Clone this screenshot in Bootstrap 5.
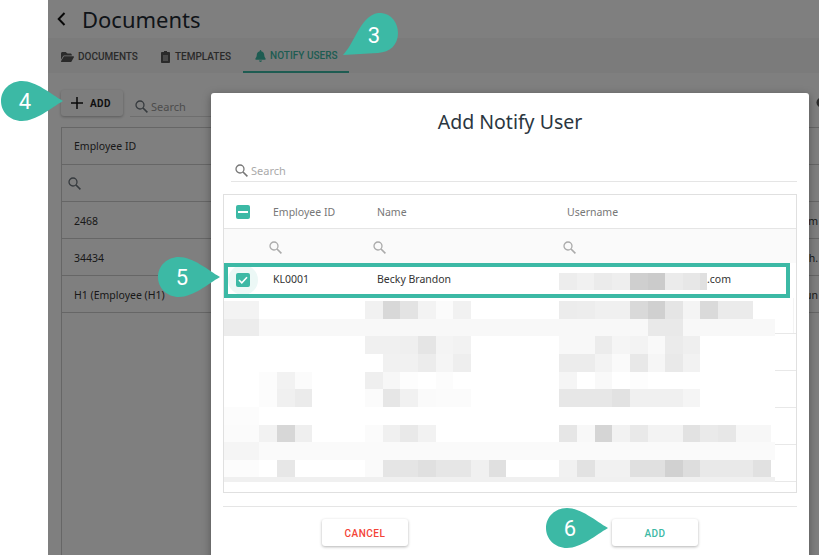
<!DOCTYPE html>
<html lang="en">
<head>
    <meta charset="UTF-8">
    <meta name="viewport" content="width=device-width, initial-scale=1.0">
    <title>Add Notify User</title>
    <link href="https://cdn.jsdelivr.net/npm/bootstrap@5.3.0/dist/css/bootstrap.min.css" rel="stylesheet">
    <style>
html, body { height: 100%; overflow: hidden; background: #fff; }
body { font-family: "Noto Sans", sans-serif; color: #222; }

.screen { width: 819px; height: 555px; overflow: hidden; }
.gutter { width: 48px; flex: none; }
.page { flex: 1; background: #fff; overflow: hidden; }
.dim { inset: 0; background: rgba(0, 0, 0, .5); }

/* Header and tabs */
.page-head { height: 38px; padding-left: 9px; }
.page-head h1 { font-size: 22px; font-weight: 400; margin: 0 0 0 16px; color: #1f2a33; line-height: 1; }
.tabs-band { height: 35px; background: #f6f6f6; padding-left: 1px; flex-wrap: nowrap; }
.tab-item { padding: 2px 12px 0; height: 35px; font-family: Roboto, sans-serif; font-size: 10px; font-weight: 500; color: #555; gap: 4px; white-space: nowrap; text-transform: uppercase; }
.tab-tight { margin-left: -1px; gap: 5px; }
.tab-item.is-on { color: #3cb9a5; border-bottom: 2px solid #3cb9a5; }

/* Background toolbar and list */
.tool-row { height: 54px; padding-left: 13px; padding-top: 17px; }
.btn-add { width: 62px; height: 26px; padding: 0 0 0 10px; background: #fafafa; border: 0; border-radius: 3px; box-shadow: 0 1px 3px rgba(0,0,0,.3); font-family: Roboto, sans-serif; font-size: 10px; font-weight: 700; letter-spacing: .4px; color: #222; gap: 7px; }
.bg-search { margin-left: 7px; width: 200px; height: 27px; padding: 0 0 1px 5px; border-bottom: 1px solid #ddd; font-size: 11px; color: #999; gap: 3px; }
.bg-search svg { margin-bottom: 2px; }
.info-dot { position: absolute; right: -8px; top: 97px; }
.bg-table { margin-left: 13px; border-left: 1px solid #ccc; border-top: 1px solid #ccc; height: 428px; font-size: 10.5px; color: #333; }
.bg-row { height: 37px; border-bottom: 1px solid #ccc; padding-left: 12px; }
.bg-first { padding-top: 2px; }
.bg-data { padding-top: 4px; }
.bg-tail { margin-left: auto; padding-right: 1px; }

/* Modal */
.notify-modal { position: absolute; left: 163px; top: 93px; width: 598px; height: 480px; background: #fff; border-radius: 3px; box-shadow: 0 2px 8px rgba(0,0,0,.35); padding: 0 12px 0 12px; }
.notify-modal h2 { font-size: 19.5px; font-weight: 400; color: #2b3640; text-align: center; margin: 0; height: 57px; padding-top: 16px; line-height: 1.35; }
.modal-search { height: 32px; margin-left: 8px; padding: 0 0 2px 4px; border-bottom: 1px solid #e5e5e5; font-size: 11px; color: #aaa; gap: 3px; }
.modal-search svg { margin-bottom: 2px; color: #777; }
.user-table { margin-top: 12px; height: 299px; border: 1px solid #e0e0e0; font-size: 10.5px; color: #333; }
.user-cols { display: grid; grid-template-columns: 49px 104px 190px 1fr; align-items: center; }
.user-head { height: 34px; padding-top: 2px; border-bottom: 1px solid #e5e5e5; color: #777; }
.user-head .chk-cell { margin-top: -2px; }
.user-filter { height: 34px; padding-top: 2px; background: #fafafa; }
.user-picked { height: 35px; border: 4px solid #3cb9a5; padding-bottom: 2px; width: 566px; grid-template-columns: 45px 104px 190px 1fr; overflow: hidden; color: #333; }
.chk-cell { padding-left: 12px; }
.chk-box { width: 14px; height: 14px; background: #3cb9a5; border-radius: 2px; }
.chk-halo { width: 30px; height: 30px; margin: -3px 0; background: #ecf8f6; border-radius: 50%; }
.flt-icon { margin-left: -4px; color: #aaa; }
.mail-cell { margin-left: -8px; align-self: stretch; }
.mail-mask { width: 148px; height: 17px; display: block; flex: none; margin-top: 6px; }
.mail-cell span { align-self: center; }
.table-rest { display: block; }

.modal-foot { margin-top: 13px; border-top: 1px solid #e5e5e5; padding-top: 12px; }
.foot-btn { width: 86px; height: 27px; padding: 2px 0 0; background: #fff; border: 0; border-radius: 3px; box-shadow: 0 1px 3px rgba(0,0,0,.3); font-family: Roboto, sans-serif; font-size: 10px; font-weight: 500; letter-spacing: .5px; }
.foot-cancel { margin-left: 99px; color: #f44336; }
.foot-add { margin-left: 204px; color: #3cb9a5; }

/* Numbered callouts */
.step { position: absolute; width: 62px; height: 40px; }
.step svg { position: absolute; left: 0; top: 0; }
.step span { position: absolute; top: 1px; left: 0; width: 48px; height: 40px; line-height: 40px; text-align: center; color: #fff; font-family: Roboto, sans-serif; font-size: 22px; }
.step-3 { left: 343px; top: 13px; width: 56px; height: 43px; }
.step-3 span { left: 11px; top: 3px; width: 40px; }
.step-4 { left: 1px; top: 81px; }
.step-5 { left: 158px; top: 257px; }
.step-6 { left: 546px; top: 508px; }
    </style>
</head>
<body>
    <svg width="0" height="0" class="position-absolute">
        <symbol id="ico-search" viewBox="0 0 13 13"><circle cx="5" cy="5" r="4" fill="none" stroke="currentColor" stroke-width="1.3"/><path d="M8 8l4.4 4.4" stroke="currentColor" stroke-width="1.6"/></symbol>
        <symbol id="ico-drop" viewBox="0 0 62 40"><path d="M62 20C50 13 35 0 21 0 9 0 0 9 0 20s9 20 21 20c14 0 29-13 41-20z" fill="#3cb9a5"/></symbol>
    </svg>

    <div class="screen d-flex position-relative">
        <div class="gutter"></div>

        <div class="page position-relative d-flex flex-column">
            <div class="page-head d-flex align-items-center">
                <svg width="9" height="14" viewBox="0 0 9 14"><path d="M7.5 1L1.7 7l5.8 6" fill="none" stroke="#111" stroke-width="2"/></svg>
                <h1>Documents</h1>
            </div>

            <div class="nav tabs-band">
                <div class="tab-item d-flex align-items-center">
                    <svg width="13" height="12" viewBox="0 0 576 512" fill="#555"><path d="M88.7 223.8L0 375.8V96C0 60.7 28.7 32 64 32H181.5c17 0 33.3 6.7 45.3 18.7l26.5 26.5c12 12 28.3 18.7 45.3 18.7H416c35.3 0 64 28.7 64 64v32H144c-22.8 0-43.8 12.1-55.3 31.8zm27.6 16.1C122.1 230 132.6 224 144 224H544c11.5 0 22 6.2 27.7 16.1s5.7 22.2-.1 32.1l-112 192C453.9 474 443.4 480 432 480H32c-11.5 0-22-6.2-27.7-16.1s-5.7-22.2 .1-32.1l112-192z"/></svg>
                    Documents
                </div>
                <div class="tab-item tab-tight d-flex align-items-center">
                    <svg width="9" height="12" viewBox="0 0 9 12"><path d="M3 0h3v1h2.2c.4 0 .8.4.8.8v9.4c0 .4-.4.8-.8.8H.8c-.4 0-.8-.4-.8-.8V1.800C0 1.400.4 1 .8 1H3z" fill="#555"/><path d="M2 5h5M2 7h5M2 9h5" stroke="#f6f6f6" stroke-width=".8"/></svg>
                    Templates
                </div>
                <div class="tab-item is-on d-flex align-items-center">
                    <svg width="11" height="12" viewBox="0 0 448 512" fill="#3cb9a5"><path d="M224 0c-17.700 0-32 14.300-32 32V51.200C119 66 64 130.600 64 208v18.800c0 47-17.300 92.400-48.500 127.600l-7.400 8.300c-8.400 9.400-10.400 22.900-5.300 34.400S19.400 416 32 416H416c12.600 0 24-7.400 29.200-18.900s3.100-25-5.300-34.400l-7.400-8.300C401.300 319.200 384 273.900 384 226.800V208c0-77.400-55-142-128-156.800V32c0-17.700-14.300-32-32-32zm45.300 493.300c12-12 18.700-28.300 18.700-45.300H224 160c0 17 6.700 33.300 18.700 45.300s28.300 18.700 45.300 18.700s33.300-6.700 45.300-18.700z"/></svg>
                    Notify Users
                </div>
            </div>

            <div class="tool-row d-flex align-items-start">
                <button class="btn btn-add d-flex align-items-center">
                    <svg width="12" height="12" viewBox="0 0 12 12"><path d="M6 0v12M0 6h12" stroke="#111" stroke-width="1.500"/></svg>
                    ADD
                </button>
                <div class="bg-search d-flex align-items-end">
                    <svg width="13" height="13" class="text-secondary"><use href="#ico-search"/></svg>
                    Search
                </div>
            </div>
            <svg class="info-dot" width="11" height="11" viewBox="0 0 11 11"><circle cx="5.500" cy="5.500" r="5" fill="#555"/><path d="M5.500 3v1M5.500 5v3.500" stroke="#fff" stroke-width="1.200"/></svg>

            <div class="bg-table">
                <div class="bg-row bg-first d-flex align-items-center"><span>Employee ID</span></div>
                <div class="bg-row d-flex align-items-center"><svg width="13" height="13" class="text-secondary" style="margin-left:-6px"><use href="#ico-search"/></svg></div>
                <div class="bg-row bg-data d-flex align-items-center"><span>2468</span><span class="bg-tail">om</span></div>
                <div class="bg-row bg-data d-flex align-items-center"><span>34434</span><span class="bg-tail">th.</span></div>
                <div class="bg-row bg-data d-flex align-items-center"><span>H1 (Employee (H1)</span><span class="bg-tail">un</span></div>
            </div>

            <div class="dim position-absolute"></div>

            <div class="notify-modal d-flex flex-column">
                <h2>Add Notify User</h2>
                <div class="modal-search d-flex align-items-end">
                    <svg width="13" height="13"><use href="#ico-search"/></svg>
                    Search
                </div>

                <div class="user-table">
                    <div class="user-cols user-head">
                        <div class="chk-cell">
                            <div class="chk-box d-flex align-items-center justify-content-center">
                                <svg width="10" height="2" viewBox="0 0 10 2"><path d="M0 1h10" stroke="#fff" stroke-width="2"/></svg>
                            </div>
                        </div>
                        <div>Employee ID</div>
                        <div>Name</div>
                        <div>Username</div>
                    </div>
                    <div class="user-cols user-filter">
                        <div></div>
                        <div><svg class="flt-icon d-block" width="13" height="13"><use href="#ico-search"/></svg></div>
                        <div><svg class="flt-icon d-block" width="13" height="13"><use href="#ico-search"/></svg></div>
                        <div><svg class="flt-icon d-block" width="13" height="13"><use href="#ico-search"/></svg></div>
                    </div>
                    <div class="user-cols user-picked">
                        <div class="chk-halo d-flex align-items-center justify-content-center">
                            <div class="chk-box d-flex align-items-center justify-content-center">
                                <svg width="10" height="8" viewBox="0 0 10 8"><path d="M1 4l2.800 2.800L9 1.200" fill="none" stroke="#fff" stroke-width="1.600"/></svg>
                            </div>
                        </div>
                        <div>KL0001</div>
                        <div>Becky Brandon</div>
                        <div class="mail-cell d-flex">
                            <svg class="mail-mask" viewBox="0 0 148 17">
                                <rect x="0" width="18" height="17" fill="#ededed"/><rect x="18" width="17" height="17" fill="#f1f1f1"/><rect x="35" width="18" height="17" fill="#ebebeb"/><rect x="53" width="18" height="17" fill="#eeeeee"/><rect x="71" width="18" height="17" fill="#cfcfcf"/><rect x="89" width="17" height="17" fill="#cbcbcb"/><rect x="106" width="18" height="17" fill="#ebebeb"/><rect x="124" width="17" height="17" fill="#e7e7e7"/><rect x="141" width="7" height="17" fill="#e0e0e0"/>
                            </svg>
                            <span>.com</span>
                        </div>
                    </div>

                    <!-- blurred rows, coordinates are the picture's own -->
                    <svg class="table-rest" width="573" height="185" viewBox="224 298 573 185" shape-rendering="crispEdges">
                        <g fill="#e8e8e8"><rect x="775" y="333" width="21" height="1"/><rect x="775" y="370" width="21" height="1"/><rect x="775" y="407" width="21" height="1"/><rect x="775" y="444" width="21" height="1"/><rect x="775" y="481" width="21" height="1"/></g>
                        <rect x="793" y="298" width="1" height="35" fill="#f4f4f4"/>
                        <!-- row 1 -->
                        <rect x="224" y="301" width="35" height="18" fill="#f3f3f3"/><rect x="365" y="301" width="18" height="18" fill="#f1f1f1"/><rect x="383" y="301" width="17" height="18" fill="#d8d8d8"/><rect x="400" y="301" width="18" height="18" fill="#e3e3e3"/><rect x="418" y="301" width="18" height="18" fill="#f3f3f3"/><rect x="436" y="301" width="17" height="18" fill="#fbfbfb"/><rect x="453" y="301" width="18" height="18" fill="#f1f1f1"/>
                        <rect x="559" y="301" width="18" height="18" fill="#ececec"/><rect x="577" y="301" width="18" height="18" fill="#ededed"/><rect x="595" y="301" width="35" height="18" fill="#f0f0f0"/><rect x="630" y="301" width="18" height="18" fill="#d9d9d9"/><rect x="648" y="301" width="17" height="18" fill="#d0d0d0"/><rect x="665" y="301" width="18" height="18" fill="#e5e5e5"/><rect x="683" y="301" width="17" height="18" fill="#f4f4f4"/><rect x="700" y="301" width="18" height="18" fill="#dadada"/><rect x="718" y="301" width="35" height="18" fill="#ebebeb"/>
                        <!-- row 2 -->
                        <rect x="224" y="319" width="35" height="17" fill="#ececec"/><rect x="259" y="319" width="516" height="17" fill="#f8f8f8"/><rect x="648" y="319" width="35" height="17" fill="#e9e9e9"/>
                        <!-- row 3 -->
                        <rect x="365" y="336" width="35" height="18" fill="#f0f0f0"/><rect x="400" y="336" width="18" height="18" fill="#efefef"/><rect x="418" y="336" width="18" height="18" fill="#e5e5e5"/><rect x="436" y="336" width="17" height="18" fill="#f4f4f4"/><rect x="453" y="336" width="18" height="18" fill="#f2f2f2"/>
                        <rect x="559" y="336" width="36" height="18" fill="#f8f8f8"/><rect x="595" y="336" width="17" height="18" fill="#ececec"/><rect x="612" y="336" width="18" height="18" fill="#f5f5f5"/><rect x="630" y="336" width="18" height="18" fill="#f3f3f3"/><rect x="648" y="336" width="17" height="18" fill="#f9f9f9"/><rect x="665" y="336" width="18" height="18" fill="#ebebeb"/><rect x="683" y="336" width="17" height="18" fill="#efefef"/>
                        <!-- row 4 -->
                        <rect x="383" y="354" width="35" height="18" fill="#f1f1f1"/><rect x="418" y="354" width="18" height="18" fill="#ececec"/><rect x="436" y="354" width="17" height="18" fill="#f5f5f5"/><rect x="453" y="354" width="18" height="18" fill="#eeeeee"/>
                        <rect x="559" y="354" width="36" height="18" fill="#ececec"/><rect x="595" y="354" width="17" height="18" fill="#f3f3f3"/><rect x="612" y="354" width="18" height="18" fill="#fafafa"/><rect x="630" y="354" width="18" height="18" fill="#e8e8e8"/><rect x="648" y="354" width="17" height="18" fill="#f6f6f6"/><rect x="665" y="354" width="18" height="18" fill="#e9e9e9"/><rect x="683" y="354" width="17" height="18" fill="#f2f2f2"/>
                        <!-- row 5 -->
                        <rect x="259" y="372" width="18" height="17" fill="#fcfcfc"/><rect x="277" y="372" width="18" height="17" fill="#f2f2f2"/><rect x="295" y="372" width="17" height="17" fill="#fbfbfb"/><rect x="365" y="372" width="18" height="17" fill="#efefef"/><rect x="383" y="372" width="17" height="17" fill="#f7f7f7"/><rect x="400" y="372" width="18" height="17" fill="#fdfdfd"/><rect x="436" y="372" width="17" height="17" fill="#fcfcfc"/>
                        <rect x="559" y="372" width="18" height="17" fill="#f5f5f5"/><rect x="595" y="372" width="17" height="17" fill="#f9f9f9"/><rect x="630" y="372" width="18" height="17" fill="#fdfdfd"/>
                        <!-- row 6 -->
                        <rect x="259" y="389" width="18" height="18" fill="#fcfcfc"/><rect x="277" y="389" width="18" height="18" fill="#f0f0f0"/><rect x="295" y="389" width="17" height="18" fill="#ebebeb"/><rect x="365" y="389" width="18" height="18" fill="#fbfbfb"/><rect x="383" y="389" width="17" height="18" fill="#e6e6e6"/><rect x="400" y="389" width="18" height="18" fill="#f1f1f1"/><rect x="418" y="389" width="18" height="18" fill="#fafafa"/><rect x="436" y="389" width="35" height="18" fill="#fbfbfb"/>
                        <rect x="559" y="389" width="53" height="18" fill="#e7e7e7"/><rect x="612" y="389" width="18" height="18" fill="#e2e2e2"/><rect x="630" y="389" width="53" height="18" fill="#f0f0f0"/><rect x="683" y="389" width="17" height="18" fill="#f5f5f5"/>
                        <!-- row 7 -->
                        <rect x="224" y="407" width="35" height="18" fill="#fcfcfc"/>
                        <!-- row 8 -->
                        <rect x="224" y="425" width="35" height="17" fill="#fbfbfb"/><rect x="259" y="425" width="18" height="17" fill="#f2f2f2"/><rect x="277" y="425" width="18" height="17" fill="#d7d7d7"/><rect x="295" y="425" width="17" height="17" fill="#efefef"/><rect x="365" y="425" width="18" height="17" fill="#fbfbfb"/><rect x="383" y="425" width="17" height="17" fill="#f0f0f0"/><rect x="400" y="425" width="18" height="17" fill="#e9e9e9"/><rect x="418" y="425" width="18" height="17" fill="#f2f2f2"/>
                        <rect x="559" y="425" width="18" height="17" fill="#e6e6e6"/><rect x="577" y="425" width="18" height="17" fill="#f8f8f8"/><rect x="595" y="425" width="17" height="17" fill="#d5d5d5"/><rect x="612" y="425" width="18" height="17" fill="#f2f2f2"/><rect x="630" y="425" width="18" height="17" fill="#e9e9e9"/><rect x="648" y="425" width="35" height="17" fill="#f3f3f3"/><rect x="683" y="425" width="17" height="17" fill="#e2e2e2"/><rect x="700" y="425" width="18" height="17" fill="#eaeaea"/><rect x="718" y="425" width="18" height="17" fill="#e7e7e7"/><rect x="736" y="425" width="35" height="17" fill="#f7f7f7"/>
                        <!-- row 9 -->
                        <rect x="224" y="442" width="35" height="18" fill="#f5f5f5"/><rect x="259" y="442" width="516" height="18" fill="#fafafa"/>
                        <!-- row 10 -->
                        <rect x="224" y="460" width="35" height="17" fill="#fcfcfc"/><rect x="277" y="460" width="18" height="17" fill="#e7e7e7"/><rect x="365" y="460" width="18" height="17" fill="#fafafa"/><rect x="383" y="460" width="35" height="17" fill="#e5e5e5"/><rect x="418" y="460" width="18" height="17" fill="#e0e0e0"/><rect x="436" y="460" width="35" height="17" fill="#e6e6e6"/><rect x="471" y="460" width="18" height="17" fill="#f0f0f0"/><rect x="489" y="460" width="17" height="17" fill="#e0e0e0"/>
                        <rect x="559" y="460" width="18" height="17" fill="#f1f1f1"/><rect x="577" y="460" width="18" height="17" fill="#e2e2e2"/><rect x="595" y="460" width="35" height="17" fill="#f1f1f1"/><rect x="630" y="460" width="35" height="17" fill="#e0e0e0"/><rect x="665" y="460" width="18" height="17" fill="#d1d1d1"/><rect x="683" y="460" width="17" height="17" fill="#dddddd"/><rect x="700" y="460" width="53" height="17" fill="#e9e9e9"/><rect x="753" y="460" width="18" height="17" fill="#e1e1e1"/>
                        <!-- row 11 -->
                        <rect x="224" y="477" width="551" height="5" fill="#f0f0f0"/>
                    </svg>
                </div>

                <div class="modal-foot d-flex">
                    <button class="btn foot-btn foot-cancel">CANCEL</button>
                    <button class="btn foot-btn foot-add">ADD</button>
                </div>
            </div>
        </div>

        <div class="step step-3">
            <svg width="56" height="43" viewBox="0 0 56 43"><path d="M0 42C12 30 17 3 35 0 47-1 55 9 55 20 55 32 47 39 35 40 22 41 12 41 0 42z" fill="#3cb9a5"/></svg>
            <span>3</span>
        </div>
        <div class="step step-4"><svg width="62" height="40"><use href="#ico-drop"/></svg><span>4</span></div>
        <div class="step step-5"><svg width="62" height="40"><use href="#ico-drop"/></svg><span>5</span></div>
        <div class="step step-6"><svg width="62" height="40"><use href="#ico-drop"/></svg><span>6</span></div>
    </div>

    <script src="https://cdn.jsdelivr.net/npm/bootstrap@5.3.0/dist/js/bootstrap.bundle.min.js"></script>
</body>
</html>
